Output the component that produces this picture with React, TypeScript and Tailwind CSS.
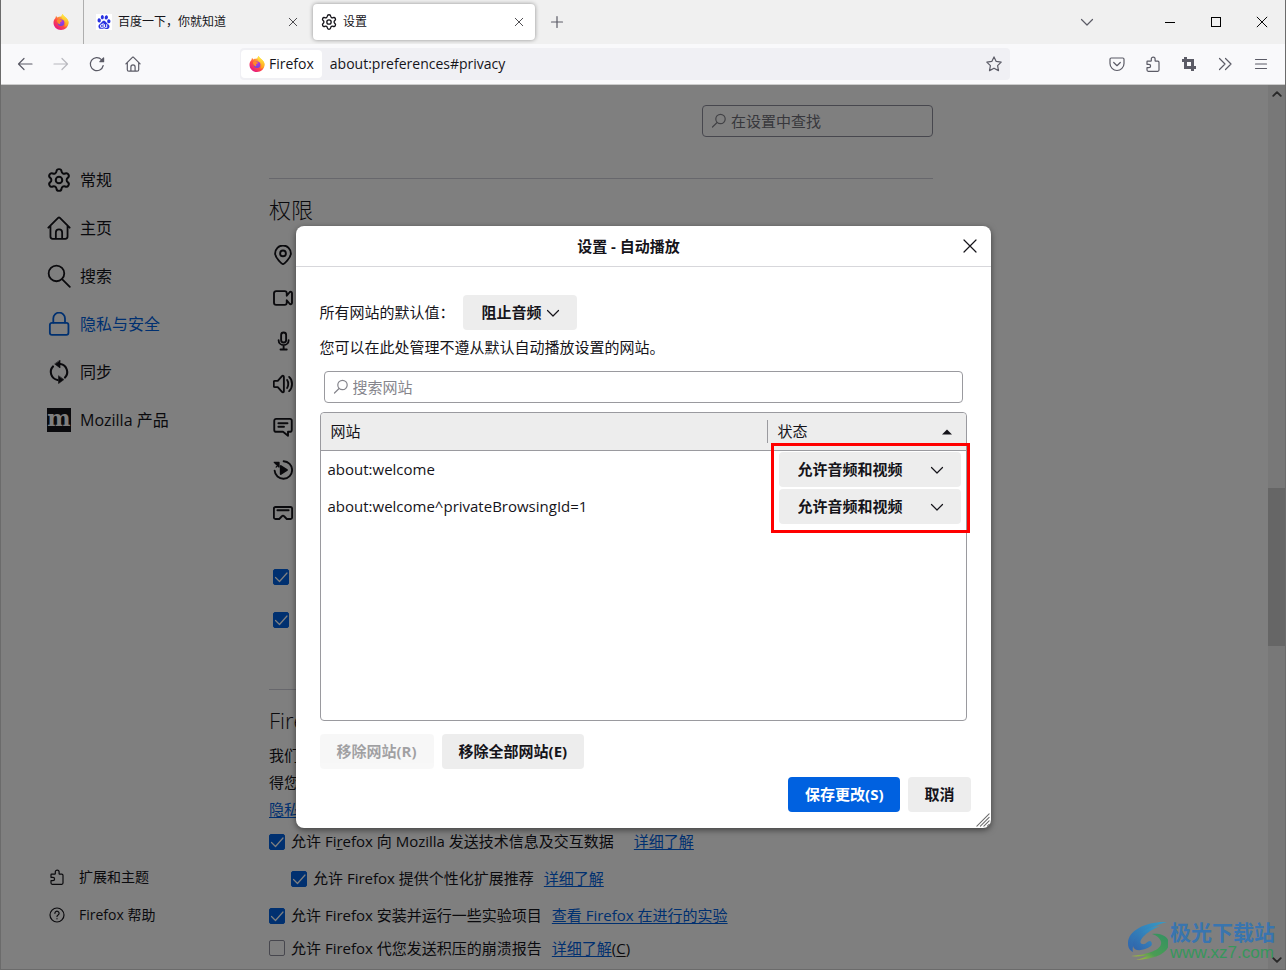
import { useState, type ReactNode } from "react";
import { SiBaidu } from "react-icons/si";

type IconProps = { className?: string; box?: string; width?: number; children: ReactNode };

function Icon({ className = "size-4", box = "0 0 16 16", width = 1.2, children }: IconProps) {
  return (
    <svg
      className={`shrink-0 ${className}`}
      viewBox={box}
      fill="none"
      stroke="currentColor"
      strokeWidth={width}
      strokeLinecap="round"
      strokeLinejoin="round"
      aria-hidden="true"
    >
      {children}
    </svg>
  );
}

function FirefoxLogo() {
  return (
    <svg className="size-4 shrink-0" viewBox="0 0 32 32" aria-hidden="true">
      <defs>
        <linearGradient id="fx-body" x1="0.85" y1="0.1" x2="0.2" y2="0.95">
          <stop offset="0" stopColor="#fff44f" />
          <stop offset="0.3" stopColor="#ffa436" />
          <stop offset="0.6" stopColor="#ff4a45" />
          <stop offset="1" stopColor="#e31587" />
        </linearGradient>
        <linearGradient id="fx-flame" x1="0.6" y1="0" x2="0.4" y2="1">
          <stop offset="0" stopColor="#fff44f" />
          <stop offset="1" stopColor="#ff980e" />
        </linearGradient>
        <radialGradient id="fx-globe" cx="0.6" cy="0.3" r="0.8">
          <stop offset="0" stopColor="#b833e1" />
          <stop offset="1" stopColor="#5b4be0" />
        </radialGradient>
      </defs>
      <path
        d="M5 8c0-2 .6-3.500 1.600-4.600.2 1.700.9 2.800 2 3.700C11 5.500 14 4.600 17 5c0-1.800.9-3.700 2.600-5 .6 3 3 4.600 5.400 6.700C28.800 9.700 31 13 31 17.500 31 25.700 24.300 32 16 32S1 25.700 1 17.500C1 13.500 2.600 10.500 5 8z"
        fill="url(#fx-body)"
      />
      <path d="M19.600 0c.6 3 3 4.600 5.400 6.700 3.800 3 6 6.300 6 10.800-1 5-5 8-9 8 4-4 4-10 0-13-3-2-5-4-5-7.500 0-1.800.9-3.700 2.600-5z" fill="url(#fx-flame)" />
      <circle cx="16" cy="17.500" r="6.500" fill="url(#fx-globe)" />
      <path d="M8 12c2-2 5-2 7 0 1 1 3 1 4 1-1 2-3 2-4 3-1.500 1-1.500 3 .5 4-3 1-6-1-7-4-.4-1.500-.6-2.800-.5-4z" fill="#ff8a2a" />
    </svg>
  );
}

const gearPath =
  "M9.671 4.136a2.34 2.34 0 0 1 4.659 0 2.34 2.34 0 0 0 3.319 1.915 2.34 2.34 0 0 1 2.33 4.033 2.34 2.34 0 0 0 0 3.831 2.34 2.34 0 0 1-2.33 4.033 2.34 2.34 0 0 0-3.319 1.915 2.34 2.34 0 0 1-4.659 0 2.34 2.34 0 0 0-3.32-1.915 2.34 2.34 0 0 1-2.33-4.033 2.34 2.34 0 0 0 0-3.831A2.34 2.34 0 0 1 6.35 6.051a2.34 2.34 0 0 0 3.319-1.915";

function GearIcon({ className }: { className?: string }) {
  return (
    <Icon className={className} box="1 1 22 22" width={1.8}>
      <path d={gearPath} />
      <circle cx="12" cy="12" r="3" />
    </Icon>
  );
}

function HomeIcon({ className, width }: { className?: string; width?: number }) {
  return (
    <Icon className={className} width={width}>
      <path d="M.9 7.800 7.400 1.300a.9.9 0 0 1 1.200 0l6.500 6.500M2.300 6.700v7a1.500 1.500 0 0 0 1.500 1.500h8.400a1.500 1.500 0 0 0 1.500-1.500v-7M5.900 15v-4a2.100 2.100 0 0 1 4.200 0v4" />
    </Icon>
  );
}

function PuzzleIcon() {
  return (
    <Icon>
      <path d="M2.500 5.200h3.300c.3 0 .5-.2.500-.5V3a1.900 1.900 0 0 1 3.800 0v1.700c0 .3.2.5.5.5h2.200c.7 0 1.200.5 1.200 1.200v7.700c0 .7-.5 1.200-1.200 1.200H3.200c-.7 0-1.200-.5-1.200-1.200v-2.400h1.900a1.700 1.700 0 0 0 0-3.400H2V5.700c0-.3.200-.5.500-.5z" />
    </Icon>
  );
}

function ChevronDown({ className = "size-4" }: { className?: string }) {
  return (
    <Icon className={className}>
      <path d="M2.500 5.500 8 11l5.500-5.500" />
    </Icon>
  );
}

function CloseIcon({ className }: { className?: string }) {
  return (
    <Icon className={className}>
      <path d="m2 2 12 12M14 2 2 14" />
    </Icon>
  );
}

function FindIcon() {
  return (
    <Icon className="size-4 text-[#85858c]">
      <circle cx="9.500" cy="6" r="4.700" />
      <path d="M6.100 9.500 1.500 14" />
    </Icon>
  );
}

const categories = [
  { label: "常规", icon: <GearIcon className="size-6" /> },
  { label: "主页", icon: <HomeIcon className="size-6" /> },
  {
    label: "搜索",
    icon: (
      <Icon className="size-6">
        <circle cx="6.300" cy="6.300" r="5.200" />
        <path d="m10.200 10.200 5 5" />
      </Icon>
    ),
  },
  {
    label: "隐私与安全",
    active: true,
    icon: (
      <Icon className="size-6">
        <rect x="1.900" y="7.200" width="12.400" height="8" rx="1.400" />
        <path d="M4.200 7V4.300a3.900 3.900 0 0 1 7.800 0V7" />
      </Icon>
    ),
  },
  {
    label: "同步",
    icon: (
      <Icon className="size-6" width={1.4}>
        <path d="M9 2.700A5.400 5.400 0 0 1 12 11.700M7 13.300A5.400 5.400 0 0 1 4 4.300" />
        <path d="M8.700.3v5L5.300 2.800zM7.700 10.700v5l3.400-2.500z" fill="currentColor" strokeWidth=".4" />
      </Icon>
    ),
  },
  {
    label: "Mozilla 产品",
    icon: (
      <span className="flex size-6 items-center justify-center bg-[#15141a] pb-1 font-['DejaVu_Serif',serif] text-[22px] leading-none font-bold text-white">
        m
      </span>
    ),
  },
];

const permissionIcons = [
  <>
    <path d="M8 15.300c-.5 0-6.300-4.600-6.300-8.600a6.300 6.300 0 0 1 12.600 0c0 4-5.800 8.600-6.300 8.600z" />
    <circle cx="8" cy="6.700" r="2.300" />
  </>,
  <path d="M2.500 2.500h6.800A1.700 1.700 0 0 1 11 4.200v2L13.300 3.400c.7-.7 1.900-.3 1.900.8v7.600c0 1.100-1.200 1.500-1.900.8L11 9.800v2a1.700 1.700 0 0 1-1.700 1.700H2.500a1.700 1.700 0 0 1-1.700-1.700V4.200a1.700 1.700 0 0 1 1.700-1.700z" />,
  <>
    <rect x="6.500" y="1.200" width="4" height="8" rx="2" />
    <path d="M4.500 7.300a4 4 0 0 0 8 0M8.500 11.500v3.300M6 14.800h5" />
  </>,
  <>
    <path d="M1.500 5.500h2.300l3.400-3.800c.6-.7 1.500-.3 1.500.6v11.400c0 .9-.9 1.300-1.500.6l-3.400-3.800H1.500c-.5 0-.9-.4-.9-.9V6.400c0-.5.4-.9.9-.9z" />
    <path d="M11.300 4.800c1.200 1.700 1.200 4.700 0 6.400M12.900 2.300c3.100 2.700 3.100 8.700 0 11.400" />
  </>,
  <path d="M2.500 1.500h11a1.500 1.500 0 0 1 1.500 1.500v7.300a1.500 1.500 0 0 1-1.500 1.500h-1.500v3.200l-4-3.200H2.500A1.500 1.500 0 0 1 1 10.300V3a1.500 1.500 0 0 1 1.500-1.500zM4.300 5h7.300M4.300 7.800h4.500" />,
  <>
    <path d="M8.500 1a7 7 0 1 1-7.200 7.500" />
    <path d="M1 1.800h3.800v3.800zM2.500 5.700l1.600-1.800" fill="currentColor" strokeWidth="1" />
    <path d="M6.200 4.800v6.400l5-3.200z" fill="currentColor" />
  </>,
  <path d="M2 3.200h12a1.300 1.300 0 0 1 1.300 1.300v7a1.300 1.300 0 0 1-1.300 1.300h-3L8.900 10.600a1.200 1.200 0 0 0-1.800 0L5 12.800H2a1.300 1.300 0 0 1-1.300-1.300v-7A1.300 1.300 0 0 1 2 3.200zM3.500 5.800h9" />,
];

function Checkbox({ id, label, checked = true }: { id: string; label?: string; checked?: boolean }) {
  const [on, setOn] = useState(checked);
  return (
    <span className="relative flex size-4 shrink-0">
      <input
        id={id}
        type="checkbox"
        aria-label={label}
        checked={on}
        onChange={() => setOn(!on)}
        className="size-4 appearance-none rounded-xs border border-[#8f8f9d] checked:border-[#0061e0] checked:bg-[#0061e0]"
      />
      {on && (
        <Icon className="pointer-events-none absolute inset-0 size-4 text-white">
          <path d="m2.500 8.500 4 4 7.500-8.500" />
        </Icon>
      )}
    </span>
  );
}

function LearnMore({ children }: { children: ReactNode }) {
  return (
    <a href="#" className="text-[#0061e0] underline underline-offset-2">
      {children}
    </a>
  );
}

function TabBar() {
  return (
    <div className="flex h-11 items-center bg-[#f0f0f0] text-xs text-[#15141a]">
      <div className="flex h-full w-[83px] items-center justify-end border-r border-[#aeaeae] pr-3.5">
        <FirefoxLogo />
      </div>
      <div className="flex w-[225px] items-center gap-1.5 pr-2 pl-3">
        <span className="flex size-4 shrink-0 items-center justify-center bg-white">
          <SiBaidu className="size-3.5 text-[#2932e1]" />
        </span>
        <span className="flex-1">百度一下，你就知道</span>
        <button aria-label="关闭标签页" className="flex size-4 items-center justify-center">
          <CloseIcon className="size-2.5" />
        </button>
      </div>
      <div className="ml-1 flex h-9 w-[222px] items-center gap-1.5 rounded bg-white px-2 shadow-[0_0_4px_rgba(0,0,0,0.4)]">
        <GearIcon className="size-4" />
        <span className="flex-1">设置</span>
        <button aria-label="关闭标签页" className="flex size-4 items-center justify-center">
          <CloseIcon className="size-2.5" />
        </button>
      </div>
      <button aria-label="新建标签页" className="ml-3.5 text-[#5b5b66]">
        <Icon className="size-4">
          <path d="M8 2.500v11M2.500 8h11" />
        </Icon>
      </button>
      <div className="ml-auto flex items-center">
        <button aria-label="列出所有标签页" className="mr-[52px] text-[#5b5b66]">
          <ChevronDown />
        </button>
        <button aria-label="最小化" className="flex h-11 w-[46px] items-center justify-center">
          <span className="h-px w-2.5 bg-black" />
        </button>
        <button aria-label="最大化" className="flex h-11 w-[46px] items-center justify-center">
          <span className="size-2.5 border border-black" />
        </button>
        <button aria-label="关闭" className="flex h-11 w-[46px] items-center justify-center">
          <Icon className="size-3 text-black" width={1.3}>
            <path d="m1.500 1.500 13 13M14.500 1.500l-13 13" />
          </Icon>
        </button>
      </div>
    </div>
  );
}

function ToolButton({ label, faded, children }: { label: string; faded?: boolean; children: ReactNode }) {
  return (
    <button
      aria-label={label}
      className={`flex h-8 w-9 items-center justify-center text-[#5b5b66] ${faded ? "opacity-40" : ""}`}
    >
      {children}
    </button>
  );
}

function NavBar() {
  return (
    <div className="flex h-[41px] items-center border-b border-[#cccccc] bg-[#f9f9fb] px-1.5">
      <ToolButton label="后退">
        <Icon><path d="M15 8H1.500M7 2.500 1.500 8 7 13.500" /></Icon>
      </ToolButton>
      <ToolButton label="前进" faded>
        <Icon><path d="M1 8h13.500M9 2.500 14.500 8 9 13.500" /></Icon>
      </ToolButton>
      <ToolButton label="重新载入">
        <Icon>
          <path d="M14.200 9.500A6.500 6.500 0 1 1 12.500 3.600l1.500 1.500" />
          <path d="M14.600 2v3.700h-3.700z" fill="currentColor" />
        </Icon>
      </ToolButton>
      <ToolButton label="主页">
        <HomeIcon />
      </ToolButton>
      <div className="mx-[89px] flex h-8 flex-1 items-center rounded bg-[#f0f0f4] p-px pr-2 text-sm text-[#15141a]">
        <div className="flex h-7 items-center gap-1 rounded bg-white px-2">
          <FirefoxLogo />
          <span>Firefox</span>
        </div>
        <input
          aria-label="地址栏"
          defaultValue="about:preferences#privacy"
          className="min-w-0 flex-1 bg-transparent px-2 outline-none"
        />
        <button aria-label="添加书签" className="text-[#5b5b66]">
          <Icon>
            <path d="m8 .9 2.200 4.500 5 .7-3.600 3.500.9 5L8 12.200l-4.500 2.400.9-5L.8 6.100l5-.7z" />
          </Icon>
        </button>
      </div>
      <ToolButton label="保存到 Pocket">
        <Icon>
          <path d="M2.200 2h11.600c.7 0 1.200.5 1.200 1.200v4.300a7 7 0 0 1-14 0V3.200C1 2.500 1.500 2 2.200 2zM4.700 6.500 8 9.700l3.300-3.200" />
        </Icon>
      </ToolButton>
      <ToolButton label="扩展">
        <PuzzleIcon />
      </ToolButton>
      <ToolButton label="截图">
        <Icon width={3}>
          <path d="M4.500 1v10.500H15M1 4.500h10.500V15" strokeLinecap="butt" strokeLinejoin="miter" />
        </Icon>
      </ToolButton>
      <ToolButton label="更多工具">
        <Icon><path d="M2.500 2.500 8 8l-5.500 5.500M8.500 2.500 14 8l-5.500 5.500" /></Icon>
      </ToolButton>
      <ToolButton label="菜单">
        <Icon><path d="M2.500 3.500h11M2.500 8h11M2.500 12.500h11" /></Icon>
      </ToolButton>
    </div>
  );
}

function Sidebar() {
  return (
    <nav className="flex w-[268px] shrink-0 flex-col pt-[71px] pb-[35px] pl-[46px]">
      {categories.map((c) => (
        <a
          key={c.label}
          href="#"
          className={`flex h-12 items-center gap-[9px] text-base ${c.active ? "text-[#0061e0]" : ""}`}
        >
          {c.icon}
          <span>{c.label}</span>
        </a>
      ))}
      <div className="mt-auto text-sm">
        <a href="#" className="flex h-[38px] items-center gap-3.5 pl-0.5">
          <PuzzleIcon />
          <span>扩展和主题</span>
        </a>
        <a href="#" className="flex h-[38px] items-center gap-3.5 pl-0.5">
          <Icon>
            <circle cx="8" cy="8" r="7" />
            <path d="M5.900 6.300a2.100 2.100 0 1 1 3.200 1.800c-.8.500-1.100.8-1.100 1.500M8 11.700v.1" />
          </Icon>
          <span>Firefox 帮助</span>
        </a>
      </div>
    </nav>
  );
}

function Preferences() {
  return (
    <main className="max-w-[664px] flex-1 pt-5">
      <label className="ml-auto flex h-8 w-[231px] items-center gap-1 rounded border border-[#8f8f9d] px-2">
        <FindIcon />
        <input
          aria-label="在设置中查找"
          placeholder="在设置中查找"
          className="min-w-0 flex-1 outline-none placeholder:text-[#6f6f78]"
        />
      </label>

      <hr className="mt-[41px] border-[#cfcfd8]" />
      <h2 className="mt-4 text-[22px] leading-7 font-light">权限</h2>
      <ul className="mt-2.5 pl-1">
        {permissionIcons.map((shape, i) => (
          <li key={i} className="flex h-[43px] items-center">
            <Icon className="size-5" width={1.5}>{shape}</Icon>
          </li>
        ))}
      </ul>
      <div className="mt-[21px] pl-1">
        <div className="flex h-[43px] items-center">
          <Checkbox id="block-popups" label="阻止弹出式窗口" />
        </div>
        <div className="flex h-[43px] items-center">
          <Checkbox id="warn-addons" label="当网站尝试安装附加组件时警告您" />
        </div>
      </div>

      <hr className="mt-12 border-[#cfcfd8]" />
      <h2 className="mt-4 text-[22px] leading-7 font-light">Firefox</h2>
      <div className="mt-2 leading-[27px]">
        <p>我们</p>
        <p>得您</p>
        <p>
          <LearnMore>隐私</LearnMore>
        </p>
      </div>
      <div className="flex h-[37px] items-center">
        <Checkbox id="telemetry" />
        <label htmlFor="telemetry" className="mr-5 ml-1.5">
          允许 Fi<u className="underline-offset-2">r</u>efox 向 Mozilla 发送技术信息及交互数据
        </label>
        <LearnMore>详细了解</LearnMore>
      </div>
      <div className="flex h-[37px] items-center pl-[22px]">
        <Checkbox id="recommend" />
        <label htmlFor="recommend" className="mr-2.5 ml-1.5">
          允许 Firefox 提供个性化扩展推荐
        </label>
        <LearnMore>详细了解</LearnMore>
      </div>
      <div className="flex h-[37px] items-center">
        <Checkbox id="studies" />
        <label htmlFor="studies" className="mr-2.5 ml-1.5">
          允许 Firefox 安装并运行一些实验项目
        </label>
        <LearnMore>查看 Firefox 在进行的实验</LearnMore>
      </div>
      <div className="flex h-7 items-center">
        <Checkbox id="crash" checked={false} />
        <label htmlFor="crash" className="mr-2.5 ml-1.5">
          允许 Firefox 代您发送积压的崩溃报告
        </label>
        <LearnMore>详细了解</LearnMore>
        <span>
          (<u className="underline-offset-2">C</u>)
        </span>
      </div>
    </main>
  );
}

function Scrollbar() {
  return (
    <div className="ml-auto flex w-[17px] shrink-0 flex-col items-center justify-between bg-[#f0f0f0] py-1 text-[#505050]">
      <Icon className="size-2.5" width={3}>
        <path d="m2 11 6-6 6 6" />
      </Icon>
      <div className="mt-20 h-[158px] w-full bg-[#cdcdcd]" />
      <Icon className="size-2.5" width={3}>
        <path d="m2 5 6 6 6-6" />
      </Icon>
    </div>
  );
}

function StatusSelect({ site }: { site: string }) {
  return (
    <div className="relative">
      <select
        aria-label={site}
        className="h-[35px] w-full appearance-none rounded bg-[#ededed] pr-10 pl-[19px] font-bold"
      >
        <option>允许音频和视频</option>
      </select>
      <ChevronDown className="pointer-events-none absolute top-2.5 right-4 size-4" />
    </div>
  );
}

const sites = ["about:welcome", "about:welcome^privateBrowsingId=1"];

function AutoplayDialog() {
  return (
    <div
      role="dialog"
      aria-labelledby="dialog-title"
      className="relative w-[695px] rounded-lg bg-white pb-4 shadow-[0_2px_6px_rgba(0,0,0,0.5)]"
    >
      <header className="flex h-[41px] items-center border-b border-[#d7d7db] pr-[7px] pl-1.5">
        <h1 id="dialog-title" className="flex-1 text-center font-bold">设置 - 自动播放</h1>
        <button aria-label="关闭" className="flex size-7 items-center justify-center">
          <CloseIcon />
        </button>
      </header>

      <div className="px-6 pt-7">
        <div className="flex items-center">
          <label htmlFor="default-autoplay" className="w-[143px]">所有网站的默认值：</label>
          <div className="relative w-[114px]">
            <select
              id="default-autoplay"
              className="h-[35px] w-full appearance-none rounded bg-[#ededed] pl-[19px] font-bold"
            >
              <option>阻止音频</option>
            </select>
            <ChevronDown className="pointer-events-none absolute top-2.5 right-4 size-4" />
          </div>
        </div>
        <p className="mt-[5px] leading-6">您可以在此处管理不遵从默认自动播放设置的网站。</p>

        <label className="mx-1 mt-3 flex h-8 items-center gap-1 rounded border border-[#9a9a9f] px-2">
          <FindIcon />
          <input
            aria-label="搜索网站"
            placeholder="搜索网站"
            className="min-w-0 flex-1 outline-none placeholder:text-[#85858c]"
          />
        </label>

        <div className="relative mt-[9px] min-h-[309px] rounded border border-[#9a9a9f]">
          <table className="w-full table-fixed border-separate border-spacing-0">
            <thead>
              <tr className="h-[38px] bg-[#ededed] text-left">
                <th className="rounded-tl border-b border-[#9a9a9f] p-0 pl-2.5 font-normal">
                  <div className="border-r border-[#9a9a9f]">网站</div>
                </th>
                <th className="w-[198px] rounded-tr border-b border-[#9a9a9f] p-0 font-normal">
                  <div className="flex items-center justify-between pr-3.5 pl-2.5">
                    状态
                    <svg className="h-1.5 w-2.5" viewBox="0 0 10 6" aria-hidden="true">
                      <path d="M0 5.500 5 .5l5 5z" fill="currentColor" />
                    </svg>
                  </div>
                </th>
              </tr>
            </thead>
            <tbody>
              {sites.map((site) => (
                <tr key={site} className="h-[37px]">
                  <td className="p-0 pl-[7px]">{site}</td>
                  <td className="py-px pr-[5px] pl-[11px]">
                    <StatusSelect site={site} />
                  </td>
                </tr>
              ))}
            </tbody>
          </table>
          {/* highlight round the status menus */}
          <div className="pointer-events-none absolute top-[30px] -right-1 h-[90px] w-[199px] border-3 border-[#ff0000]" />
        </div>

        <div className="mt-[13px] flex gap-2 font-bold">
          <button disabled className="h-[35px] rounded bg-[#ededed] px-[17px] opacity-40">移除网站(R)</button>
          <button className="h-[35px] rounded bg-[#ededed] px-[17px]">移除全部网站(E)</button>
        </div>
      </div>

      <footer className="mt-2 flex justify-end gap-2 px-5 font-bold">
        <button className="h-[35px] rounded bg-[#0061e0] px-[17px] text-white">保存更改(S)</button>
        <button className="h-[35px] rounded bg-[#ededed] px-4">取消</button>
      </footer>

      <Icon className="absolute right-px bottom-px size-3.5 text-[#6a6a6a]">
        <path d="M1 15 15 1M5 15 15 5M9 15l6-6M13 15l2-2" />
      </Icon>
    </div>
  );
}

function Watermark() {
  return (
    <div className="absolute right-2.5 bottom-2 flex items-center gap-0.5 opacity-90">
      <svg className="h-10 w-10" viewBox="0 0 40 40" aria-hidden="true">
        <defs>
          <linearGradient id="wm-blue" x1="1" y1="0" x2="0" y2="1">
            <stop offset="0" stopColor="#2fa0d0" />
            <stop offset="1" stopColor="#2860b0" />
          </linearGradient>
          <linearGradient id="wm-green" x1="1" y1="0" x2="0" y2="1">
            <stop offset="0" stopColor="#2a9460" />
            <stop offset="0.6" stopColor="#46a050" />
            <stop offset="1" stopColor="#d0cc30" />
          </linearGradient>
        </defs>
        <path d="M39 1C19 0 0 9 0 22c0 4 1 7 5 9C3 20 14 8 39 1z" fill="url(#wm-blue)" />
        <path d="M32 5C15 7 4 16 5 25c1 6 11 5 18 0 2-2 0-5-1-5-3 0-4 4-8 3-5-2 3-12 18-18z" fill="url(#wm-blue)" />
        <path d="M24 13c8-1 17 2 17 10-1 9-14 15-33 16 5-1 9-3 12-5-5 1-11 2-17 1 13-1 29-5 30-12 1-4-3-8-9-10z" fill="url(#wm-green)" />
      </svg>
      <div className="font-['Liberation_Sans','Noto_Sans_CJK_SC',sans-serif]">
        <div className="text-[21px] leading-6 font-bold text-[#3274b5]">极光下载站</div>
        <div className="text-[17px] leading-4 text-[#2f9a58]">www.xz7.com</div>
      </div>
    </div>
  );
}

export default function App() {
  return (
    <div className="flex min-h-screen flex-col border-x border-[#6b6b6b] bg-white font-['Open_Sans','Noto_Sans_CJK_SC',sans-serif] text-[15px] text-[#15141a]">
      <TabBar />
      <NavBar />
      <div className="relative flex flex-1 border-b border-[#6b6b6b]">
        <Sidebar />
        <Preferences />
        <Scrollbar />
        <div className="absolute inset-0 flex items-center justify-center bg-black/50">
          <AutoplayDialog />
        </div>
        <Watermark />
      </div>
    </div>
  );
}
